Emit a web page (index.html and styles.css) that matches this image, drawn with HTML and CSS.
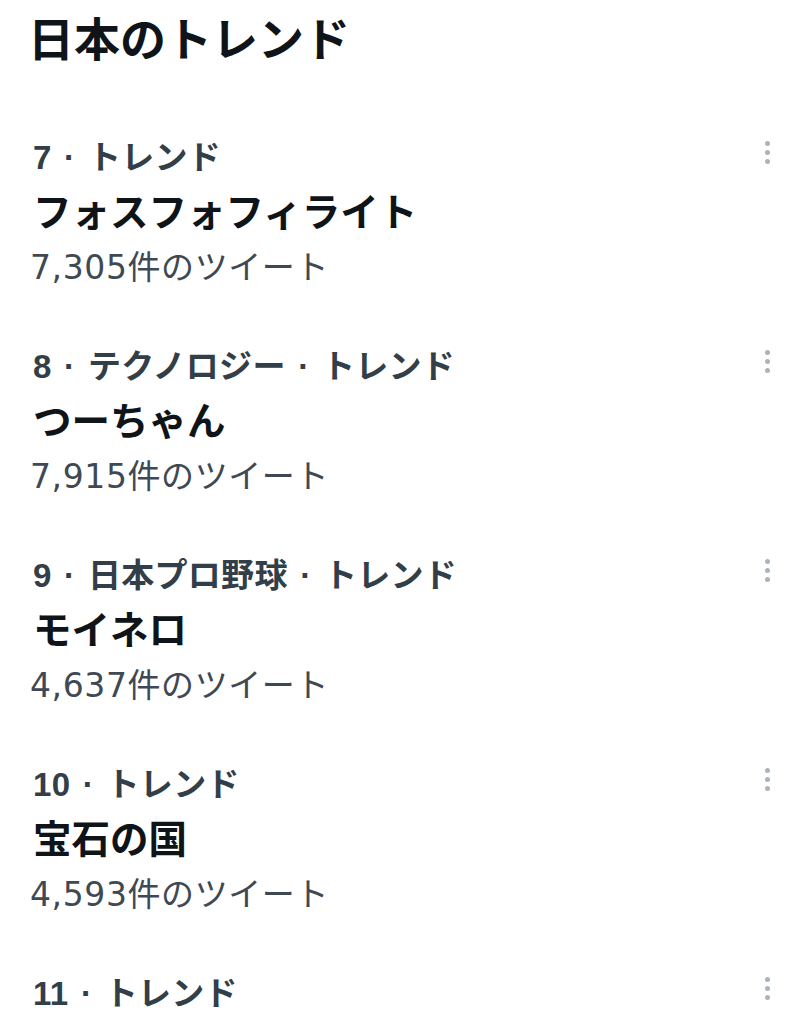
FILE: index.html
```html
<!DOCTYPE html>
<html lang="ja">
<head>
    <meta charset="UTF-8">
    <meta name="viewport" content="width=device-width, initial-scale=1.0">
    <title>日本のトレンド</title>
    <link rel="stylesheet" href="styles.css">
</head>
<body>

    <h1 class="page-title">日本のトレンド</h1>

    <div class="trend-list">
        <div class="trend">
            <div class="trend-meta"><span>7 · トレンド</span><span class="more"><i></i><i></i><i></i></span></div>
            <div class="trend-name">フォスフォフィライト</div>
            <div class="trend-count">7,305件のツイート</div>
        </div>
        <div class="trend">
            <div class="trend-meta"><span>8 · テクノロジー · トレンド</span><span class="more"><i></i><i></i><i></i></span></div>
            <div class="trend-name">つーちゃん</div>
            <div class="trend-count">7,915件のツイート</div>
        </div>
        <div class="trend">
            <div class="trend-meta"><span>9 · 日本プロ野球 · トレンド</span><span class="more"><i></i><i></i><i></i></span></div>
            <div class="trend-name">モイネロ</div>
            <div class="trend-count">4,637件のツイート</div>
        </div>
        <div class="trend">
            <div class="trend-meta"><span>10 · トレンド</span><span class="more"><i></i><i></i><i></i></span></div>
            <div class="trend-name">宝石の国</div>
            <div class="trend-count">4,593件のツイート</div>
        </div>
        <div class="trend">
            <div class="trend-meta"><span>11 · トレンド</span><span class="more"><i></i><i></i><i></i></span></div>
        </div>
    </div>

</body>
</html>
```

FILE: styles.css
```css
* { margin: 0; padding: 0; box-sizing: border-box; }
body {
    background: #ffffff;
    font-family: "Liberation Sans", "Noto Sans CJK JP", sans-serif;
    overflow: hidden;
    height: 1024px;
}

.page-title {
    font-size: 46px;
    font-weight: bold;
    color: #0f1419;
    line-height: 80px;
    padding-left: 28px;
}

.trend-list {
    margin-top: 28px;
}

.trend {
    padding: 22px 37px 22px 33px;
}

.trend-meta {
    display: flex;
    justify-content: space-between;
    align-items: center;
    font-size: 33px;
    font-weight: bold;
    line-height: 55px;
    word-spacing: 3px;
    letter-spacing: 0.3px;
    color: #323e48;
}

.trend-name {
    font-size: 38.5px;
    font-weight: bold;
    line-height: 55px;
    color: #0f1419;
}

.trend-count {
    font-family: "DejaVu Sans", "Noto Sans CJK JP", sans-serif;
    font-size: 33px;
    line-height: 55px;
    letter-spacing: 0.6px;
    color: #3f4953;
    margin-left: -3px;
}

/* 縦三点メニュー */
.more {
    display: flex;
    flex-direction: column;
    gap: 4px;
    margin-top: -10px;
}

.more i {
    display: block;
    width: 5px;
    height: 5px;
    border-radius: 50%;
    background: #aab4bc;
}
```
